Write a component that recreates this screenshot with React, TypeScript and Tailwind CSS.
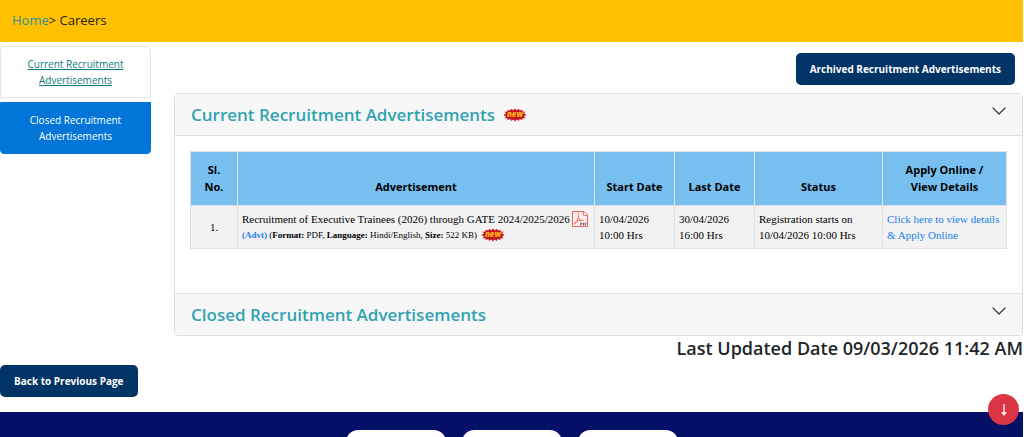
import React from "react";

const columns = [
  { label: "Sl. No.", width: "w-[47px]" },
  { label: "Advertisement", width: "" },
  { label: "Start Date", width: "w-[80px]" },
  { label: "Last Date", width: "w-[80px]" },
  { label: "Status", width: "w-[128px]" },
  { label: "Apply Online / View Details", width: "w-[124px]" },
];

const NewBadge: React.FC = () => (
  <svg
    width="24"
    height="14"
    viewBox="0 0 24 14"
    role="img"
    aria-label="new"
    className="inline-block shrink-0"
  >
    <path
      d="M12 0.5l1.6 1.7 2.4-1.5.6 1.9 3-.9-.2 1.9 3.2.1-1.7 1.6 2.6 1.7-2.6 1.4 1.7 1.8-3.2 0 .2 1.9-3-1-.6 2-2.4-1.6L12 13.5l-1.6-1.9L8 13.1l-.6-2-3 1 .2-1.9-3.2 0 1.7-1.8L.5 7l2.6-1.7-1.7-1.6 3.2-.1-.2-1.9 3 .9.6-1.9 2.4 1.5z"
      fill="#c4161c"
    />
    <text
      x="12"
      y="9"
      textAnchor="middle"
      fontFamily="Open Sans, sans-serif"
      fontSize="8"
      fontWeight="800"
      fontStyle="italic"
      fill="#ffb020"
    >
      new
    </text>
  </svg>
);

const PdfIcon: React.FC = () => (
  <svg
    width="16"
    height="16"
    viewBox="0 0 16 16"
    fill="none"
    stroke="#e8665e"
    role="img"
    aria-label="PDF"
    className="inline-block align-middle"
  >
    <path d="M.5.5h11.500l3.500 3.500v11.500H.5z" fill="#fbefee" />
    <path d="M11.500.5v4h4" strokeWidth="0.8" />
    <path
      d="M5.500 2c1.500 0 1 4 .3 6C5 10.500 3.500 13 2.300 13.200 1.500 12.500 3.500 10.500 6 9.800c2-.6 4-.8 5.500-.5M6.300 5c.3 2.500 1.700 4 3.700 5"
      strokeWidth="0.9"
    />
    <path
      d="M8.500 14.500V12h1.200v1.200H8.500M11 12v2.200h.9v-2.200zM13.300 14.500V12h1.300M13.300 13.200h1"
      stroke="#555"
      strokeWidth="0.7"
    />
  </svg>
);

const Chevron: React.FC = () => (
  <svg
    width="14"
    height="8"
    viewBox="0 0 14 8"
    fill="none"
    stroke="#333"
    strokeWidth="1.2"
    strokeLinecap="round"
    strokeLinejoin="round"
    className="mt-[13px] shrink-0"
  >
    <path d="M1 1l6 6 6-6" />
  </svg>
);

const PanelHeader: React.FC<{ title: string; isNew?: boolean }> = ({
  title,
  isNew,
}) => (
  <button
    type="button"
    className="flex h-[41px] w-full items-start justify-between bg-[#f7f7f7] px-4 text-left"
  >
    <span className="flex h-full items-center gap-2 text-[17px] font-semibold text-[#31a2b3]">
      {title}
      {isNew && <NewBadge />}
    </span>
    <Chevron />
  </button>
);

const App: React.FC = () => {
  return (
    <div className="relative flex h-screen flex-col overflow-hidden bg-white pr-px font-['Open_Sans',sans-serif] text-[#212529]">
      <nav className="flex h-[42px] shrink-0 items-center bg-[#ffc000] px-3 text-[13px]">
        <a href="#" className="text-[#31909b]">
          Home
        </a>
        <span>&gt; Careers</span>
      </nav>

      <div className="flex shrink-0 gap-[23px]">
        <aside className="flex w-[151px] shrink-0 flex-col gap-1 pt-1 text-center text-[10px] leading-4">
          <a
            href="#"
            className="rounded-t border border-[#e6e6e6] px-5 py-[9px] text-[#0f7b7b] underline"
          >
            Current Recruitment Advertisements
          </a>
          <a
            href="#"
            className="rounded-b border border-[#0275d8] bg-[#0275d8] px-5 py-[9px] text-white"
          >
            Closed Recruitment Advertisements
          </a>
        </aside>

        <main className="min-w-0 flex-1">
          <div className="flex justify-end pt-[11px] pr-2 pb-2">
            <button
              type="button"
              className="h-8 rounded-[5px] bg-[#003366] px-[14px] text-[10px] font-bold text-white"
            >
              Archived Recruitment Advertisements
            </button>
          </div>

          <section className="rounded border border-[#dfdfdf]">
            <PanelHeader title="Current Recruitment Advertisements" isNew />
            <div className="border-y border-[#dfdfdf] px-[15px] pt-[15px] pb-11">
              <table className="w-full table-fixed border-collapse">
                <thead>
                  <tr className="h-[54px] bg-[#77bfef] text-[11px] leading-[17px] font-bold text-black">
                    {columns.map((col) => (
                      <th
                        key={col.label}
                        scope="col"
                        className={`border border-[#dee2e6] px-2 pb-[10px] align-bottom ${col.width}`}
                      >
                        {col.label}
                      </th>
                    ))}
                  </tr>
                </thead>
                <tbody className="font-['Liberation_Serif',serif] text-[11px] leading-4 text-black">
                  <tr className="h-[43px] bg-[#f2f2f2]">
                    <td className="border border-[#dee2e6] text-center">1.</td>
                    <td className="border border-[#dee2e6] px-1 whitespace-nowrap">
                      <div className="flex items-center gap-0.5">
                        Recruitment of Executive Trainees (2026) through GATE
                        2024/2025/2026
                        <PdfIcon />
                      </div>
                      <div className="flex items-center gap-1 text-[9px] leading-4">
                        <span>
                          <a href="#" className="font-bold text-[#1a7ff0]">
                            (Advt)
                          </a>{" "}
                          (<b>Format:</b> PDF, <b>Language:</b> Hindi/English,{" "}
                          <b>Size:</b> 522 KB)
                        </span>
                        <NewBadge />
                      </div>
                    </td>
                    <td className="border border-[#dee2e6] px-1">
                      10/04/2026 10:00 Hrs
                    </td>
                    <td className="border border-[#dee2e6] px-1">
                      30/04/2026 16:00 Hrs
                    </td>
                    <td className="border border-[#dee2e6] px-1">
                      Registration starts on 10/04/2026 10:00 Hrs
                    </td>
                    <td className="border border-[#dee2e6] px-1">
                      <a href="#" className="text-[#1a7ff0]">
                        Click here to view details &amp; Apply Online
                      </a>
                    </td>
                  </tr>
                </tbody>
              </table>
            </div>
            <PanelHeader title="Closed Recruitment Advertisements" />
          </section>

          <p className="text-right text-lg leading-[25px] font-semibold">
            Last Updated Date 09/03/2026 11:42 AM
          </p>
        </main>
      </div>

      <div className="shrink-0 pt-1 pb-[15px]">
        <button
          type="button"
          className="h-8 rounded-[5px] bg-[#003366] px-[14px] text-[10px] font-bold text-white"
        >
          Back to Previous Page
        </button>
      </div>

      <footer className="flex flex-1 justify-center gap-4 bg-[#040f68] pt-[18px]">
        <div className="h-20 w-[100px] rounded-xl bg-white" />
        <div className="h-20 w-[100px] rounded-xl bg-white" />
        <div className="h-20 w-[100px] rounded-xl bg-white" />
      </footer>

      <button
        type="button"
        aria-label="Scroll down"
        className="absolute right-[5px] bottom-3 flex size-[31px] items-center justify-center rounded-full bg-[#dc3545] text-white"
      >
        <svg
          width="8"
          height="12"
          viewBox="0 0 8 12"
          fill="none"
          stroke="currentColor"
        >
          <path d="M4 0v10.500" strokeWidth="1.300" />
          <path
            d="M1.500 8.500h5L4 11.500z"
            fill="currentColor"
            strokeWidth="0.500"
          />
        </svg>
      </button>
    </div>
  );
};

export default App;
